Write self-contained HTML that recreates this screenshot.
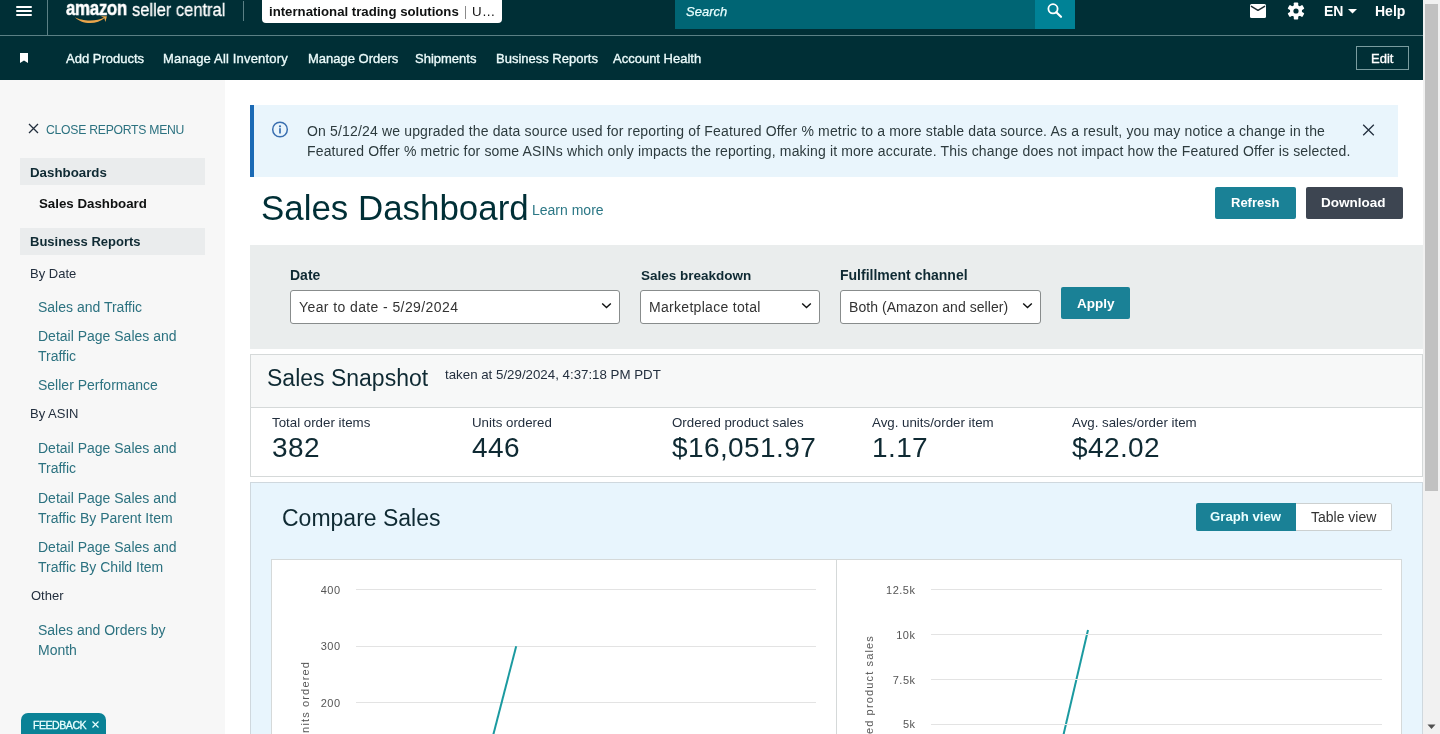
<!DOCTYPE html>
<html><head><meta charset="utf-8"><style>
html,body{margin:0;padding:0;width:1440px;height:734px;overflow:hidden;background:#fff;font-family:"Liberation Sans",sans-serif;}
.t{position:absolute;white-space:nowrap;will-change:transform;}
.r{position:absolute;}
.a{position:absolute;overflow:visible;}
</style></head><body>
<div class="r" style="left:0px;top:0px;width:1423px;height:80px;background:#002f36"></div>
<div class="r" style="left:0px;top:35px;width:1423px;height:1px;background:#5b8085"></div>
<div class="r" style="left:47px;top:0px;width:1px;height:35px;background:#5b8085"></div>
<div class="r" style="left:16px;top:6px;width:16px;height:2px;background:#fff;border-radius:1px"></div>
<div class="r" style="left:16px;top:10px;width:16px;height:2px;background:#fff;border-radius:1px"></div>
<div class="r" style="left:16px;top:14px;width:16px;height:2px;background:#fff;border-radius:1px"></div>
<div class="t" style="left:66px;top:-3.53px;font-size:20px;line-height:25px;color:#fff;font-weight:bold;transform:scaleX(0.84);transform-origin:0 0;letter-spacing:-0.3px;-webkit-text-stroke:0.5px #fff">amazon</div>
<svg class="a" style="left:0;top:0" width="120" height="30" viewBox="0 0 120 30"><path d="M75 17.2 C80 23.5 96 26 105 17.8 L104.6 17.3 C96 22.2 81 20.8 75 17.2 Z" fill="#e9a54b"/><path d="M100.8 16.2 L106.9 16.3 L105.4 21.9 L104.3 18.1 Z" fill="#e9a54b"/></svg>
<div class="t" style="left:132px;top:-2.11px;font-size:18.5px;line-height:23px;color:#fff;font-weight:normal;transform:scaleX(0.89);transform-origin:0 0;-webkit-text-stroke:0.3px #fff">seller central</div>
<div class="r" style="left:243px;top:1px;width:1px;height:20px;background:#5b8085"></div>
<div class="r" style="left:262px;top:0px;width:240px;height:23px;background:#fff;border-radius:0 0 4px 4px"></div>
<div class="t" style="left:268.5px;top:3.72px;font-size:13.2px;line-height:16px;color:#0f1111;font-weight:normal;"><b>international trading solutions</b></div>
<div class="r" style="left:465px;top:6px;width:1px;height:13px;background:#8a8a8a"></div>
<div class="t" style="left:471.5px;top:3.19px;font-size:13.3px;line-height:17px;color:#111;font-weight:normal;letter-spacing:0.3px">U…</div>
<div class="r" style="left:675px;top:0px;width:360px;height:29px;background:#006574"></div>
<div class="t" style="left:686px;top:3.69px;font-size:13px;line-height:16px;color:#e8ffff;font-weight:normal;font-style:italic;-webkit-text-stroke:0.25px #e8ffff">Search</div>
<div class="r" style="left:1035px;top:0px;width:40px;height:29px;background:#008296"></div>
<svg class="a" style="left:1045px;top:1px" width="20" height="20" viewBox="0 0 20 20"><circle cx="8" cy="7.8" r="4.6" stroke="#fff" stroke-width="1.8" fill="none"/><path d="M11.3 11.2 L16 15.8" stroke="#fff" stroke-width="2.2" stroke-linecap="round"/></svg>
<svg class="a" style="left:1250px;top:4px" width="16" height="14" viewBox="0 0 16 14"><rect x="0" y="0" width="16" height="14" rx="1.5" fill="#fff"/><path d="M1.4 2.3 L8 6.4 L14.6 2.3" stroke="#1a2a30" stroke-width="1.4" fill="none" stroke-linecap="round" stroke-linejoin="round"/></svg>
<svg class="a" style="left:1287px;top:2px" width="18" height="18" viewBox="0 0 18 18"><g fill="#fff" transform="translate(9 9)"><rect x="-2.2" y="-8.5" width="4.4" height="5" rx="0.8" transform="rotate(0)"/><rect x="-2.2" y="-8.5" width="4.4" height="5" rx="0.8" transform="rotate(60)"/><rect x="-2.2" y="-8.5" width="4.4" height="5" rx="0.8" transform="rotate(120)"/><rect x="-2.2" y="-8.5" width="4.4" height="5" rx="0.8" transform="rotate(180)"/><rect x="-2.2" y="-8.5" width="4.4" height="5" rx="0.8" transform="rotate(240)"/><rect x="-2.2" y="-8.5" width="4.4" height="5" rx="0.8" transform="rotate(300)"/><circle r="6"/></g><circle cx="9" cy="9" r="2.6" fill="#002f36"/></svg>
<div class="t" style="left:1324px;top:2.15px;font-size:14px;line-height:18px;color:#fff;font-weight:bold;">EN</div>
<svg class="a" style="left:1348px;top:9px" width="9" height="5" viewBox="0 0 9 5"><path d="M0 0 L9 0 L4.5 4.5 Z" fill="#fff"/></svg>
<div class="t" style="left:1375px;top:2.15px;font-size:14px;line-height:18px;color:#fff;font-weight:bold;">Help</div>
<svg class="a" style="left:20px;top:53px" width="8" height="10" viewBox="0 0 8 10"><path d="M0 0 H8 V10 L4 7.5 L0 10 Z" fill="#fff"/></svg>
<div class="t" style="left:66px;top:51.29px;font-size:13px;line-height:16px;color:#eafafa;font-weight:normal;-webkit-text-stroke:0.35px #eafafa">Add Products</div>
<div class="t" style="left:163px;top:51.29px;font-size:13px;line-height:16px;color:#eafafa;font-weight:normal;letter-spacing:0.17px;-webkit-text-stroke:0.35px #eafafa">Manage All Inventory</div>
<div class="t" style="left:307.5px;top:51.29px;font-size:13px;line-height:16px;color:#eafafa;font-weight:normal;-webkit-text-stroke:0.35px #eafafa">Manage Orders</div>
<div class="t" style="left:414.5px;top:51.29px;font-size:13px;line-height:16px;color:#eafafa;font-weight:normal;-webkit-text-stroke:0.35px #eafafa">Shipments</div>
<div class="t" style="left:495.5px;top:51.29px;font-size:13px;line-height:16px;color:#eafafa;font-weight:normal;-webkit-text-stroke:0.35px #eafafa">Business Reports</div>
<div class="t" style="left:613px;top:51.29px;font-size:13px;line-height:16px;color:#eafafa;font-weight:normal;-webkit-text-stroke:0.35px #eafafa">Account Health</div>
<div class="r" style="left:1356px;top:46px;width:53px;height:24px;border:1px solid #7a9c9f;box-sizing:border-box"></div>
<div class="t" style="left:1371px;top:51.49px;font-size:13px;line-height:16px;color:#fff;font-weight:normal;-webkit-text-stroke:0.35px #fff">Edit</div>
<div class="r" style="left:0px;top:80px;width:225px;height:654px;background:#f7f7f7"></div>
<svg class="a" style="left:28px;top:123px" width="11" height="11" viewBox="0 0 11 11"><path d="M1 1 L10 10 M10 1 L1 10" stroke="#232f3e" stroke-width="1.3"/></svg>
<div class="t" style="left:46px;top:123.27px;font-size:12.2px;line-height:15px;color:#2c7280;font-weight:normal;letter-spacing:-0.25px">CLOSE REPORTS MENU</div>
<div class="r" style="left:20px;top:158px;width:185px;height:27px;background:#eaeced"></div>
<div class="t" style="left:30px;top:164.39px;font-size:13.3px;line-height:17px;color:#0f2a33;font-weight:bold;">Dashboards</div>
<div class="t" style="left:39px;top:194.89px;font-size:13.3px;line-height:17px;color:#0f1111;font-weight:bold;">Sales Dashboard</div>
<div class="r" style="left:20px;top:228px;width:185px;height:27px;background:#eaeced"></div>
<div class="t" style="left:30px;top:233.99px;font-size:13px;line-height:16px;color:#0f2a33;font-weight:bold;">Business Reports</div>
<div class="t" style="left:29.5px;top:265.59px;font-size:13px;line-height:16px;color:#232f3e;font-weight:normal;">By Date</div>
<div class="t" style="left:38.2px;top:298.15px;font-size:14px;line-height:18px;color:#2c7280;font-weight:normal;">Sales and Traffic</div>
<div class="t" style="left:38.2px;top:327.25px;font-size:14px;line-height:18px;color:#2c7280;font-weight:normal;">Detail Page Sales and</div>
<div class="t" style="left:38.2px;top:346.95px;font-size:14px;line-height:18px;color:#2c7280;font-weight:normal;">Traffic</div>
<div class="t" style="left:38.2px;top:375.95px;font-size:14px;line-height:18px;color:#2c7280;font-weight:normal;">Seller Performance</div>
<div class="t" style="left:29.5px;top:406.49px;font-size:13px;line-height:16px;color:#232f3e;font-weight:normal;">By ASIN</div>
<div class="t" style="left:38.2px;top:439.35px;font-size:14px;line-height:18px;color:#2c7280;font-weight:normal;">Detail Page Sales and</div>
<div class="t" style="left:38.2px;top:459.05px;font-size:14px;line-height:18px;color:#2c7280;font-weight:normal;">Traffic</div>
<div class="t" style="left:38.2px;top:489.15px;font-size:14px;line-height:18px;color:#2c7280;font-weight:normal;">Detail Page Sales and</div>
<div class="t" style="left:38.2px;top:508.85px;font-size:14px;line-height:18px;color:#2c7280;font-weight:normal;">Traffic By Parent Item</div>
<div class="t" style="left:38.2px;top:537.75px;font-size:14px;line-height:18px;color:#2c7280;font-weight:normal;">Detail Page Sales and</div>
<div class="t" style="left:38.2px;top:557.85px;font-size:14px;line-height:18px;color:#2c7280;font-weight:normal;">Traffic By Child Item</div>
<div class="t" style="left:30.8px;top:588.39px;font-size:13px;line-height:16px;color:#232f3e;font-weight:normal;">Other</div>
<div class="t" style="left:38.2px;top:620.75px;font-size:14px;line-height:18px;color:#2c7280;font-weight:normal;">Sales and Orders by</div>
<div class="t" style="left:38.2px;top:640.95px;font-size:14px;line-height:18px;color:#2c7280;font-weight:normal;">Month</div>
<div class="r" style="left:21px;top:713px;width:85px;height:27px;background:#0a8296;border-radius:7px 7px 0 0"></div>
<div class="t" style="left:32.5px;top:718.82px;font-size:10.6px;line-height:13px;color:#eaffff;font-weight:normal;letter-spacing:-0.5px;-webkit-text-stroke:0.3px #eaffff">FEEDBACK</div>
<svg class="a" style="left:92px;top:721px" width="7" height="7" viewBox="0 0 7 7"><path d="M0.5 0.5 L6.5 6.5 M6.5 0.5 L0.5 6.5" stroke="#eaffff" stroke-width="1.2"/></svg>
<div class="r" style="left:250px;top:105px;width:1148px;height:72px;background:#e9f5fc"></div>
<div class="r" style="left:250px;top:105px;width:4px;height:72px;background:#1b6ab5"></div>
<svg class="a" style="left:271px;top:121px" width="18" height="18" viewBox="0 0 18 18"><circle cx="9" cy="8.5" r="7.3" stroke="#3a6fb0" stroke-width="1.5" fill="none"/><circle cx="9" cy="5.3" r="1.1" fill="#3a6fb0"/><rect x="8.15" y="7.2" width="1.7" height="5.3" fill="#3a6fb0"/></svg>
<div class="t" style="left:306.8px;top:121.95px;font-size:14px;line-height:18px;color:#2d3b3e;font-weight:normal;letter-spacing:0.16px">On 5/12/24 we upgraded the data source used for reporting of Featured Offer % metric to a more stable data source. As a result, you may notice a change in the</div>
<div class="t" style="left:306.8px;top:142.15px;font-size:14px;line-height:18px;color:#2d3b3e;font-weight:normal;letter-spacing:0.15px">Featured Offer % metric for some ASINs which only impacts the reporting, making it more accurate. This change does not impact how the Featured Offer is selected.</div>
<svg class="a" style="left:1362px;top:124px" width="13" height="12" viewBox="0 0 13 12"><path d="M1.2 0.8 L11.8 11.2 M11.8 0.8 L1.2 11.2" stroke="#232f3e" stroke-width="1.3"/></svg>
<div class="t" style="left:260.5px;top:187.90px;font-size:34.9px;line-height:40px;color:#002f36;font-weight:normal;">Sales Dashboard</div>
<div class="t" style="left:532px;top:201.15px;font-size:14px;line-height:18px;color:#2b7785;font-weight:normal;">Learn more</div>
<div class="r" style="left:1215px;top:187px;width:81px;height:32px;background:#1a8196;border-radius:2px"></div>
<div class="t" style="left:1231px;top:194.99px;font-size:13px;line-height:16px;color:#fff;font-weight:bold;">Refresh</div>
<div class="r" style="left:1306px;top:187px;width:97px;height:32px;background:#3d4551;border-radius:2px"></div>
<div class="t" style="left:1321px;top:194.32px;font-size:13.5px;line-height:17px;color:#fff;font-weight:bold;">Download</div>
<div class="r" style="left:250px;top:245px;width:1173px;height:104px;background:#eaeded"></div>
<div class="t" style="left:290px;top:266.15px;font-size:14px;line-height:18px;color:#0f2a33;font-weight:bold;">Date</div>
<div class="t" style="left:641px;top:266.82px;font-size:13.5px;line-height:17px;color:#0f2a33;font-weight:bold;">Sales breakdown</div>
<div class="t" style="left:839.5px;top:266.15px;font-size:14px;line-height:18px;color:#0f2a33;font-weight:bold;">Fulfillment channel</div>
<div class="r" style="left:290px;top:290px;width:330px;height:34px;background:#fff;border:1px solid #888c8c;border-radius:3px;box-sizing:border-box"></div>
<div class="t" style="left:298.7px;top:298.15px;font-size:14px;line-height:18px;color:#333;font-weight:normal;letter-spacing:0.4px">Year to date - 5/29/2024</div>
<svg class="a" style="left:600.5px;top:302px" width="11" height="7" viewBox="0 0 11 7"><path d="M1.2 1.5 L5.5 5.6 L9.8 1.5" stroke="#0f1111" stroke-width="1.4" fill="none"/></svg>
<div class="r" style="left:640px;top:290px;width:180px;height:34px;background:#fff;border:1px solid #888c8c;border-radius:3px;box-sizing:border-box"></div>
<div class="t" style="left:648.7px;top:298.15px;font-size:14px;line-height:18px;color:#333;font-weight:normal;letter-spacing:0.3px">Marketplace total</div>
<svg class="a" style="left:800.5px;top:302px" width="11" height="7" viewBox="0 0 11 7"><path d="M1.2 1.5 L5.5 5.6 L9.8 1.5" stroke="#0f1111" stroke-width="1.4" fill="none"/></svg>
<div class="r" style="left:840px;top:290px;width:201px;height:34px;background:#fff;border:1px solid #888c8c;border-radius:3px;box-sizing:border-box"></div>
<div class="t" style="left:848.7px;top:298.15px;font-size:14px;line-height:18px;color:#333;font-weight:normal;letter-spacing:0.05px">Both (Amazon and seller)</div>
<svg class="a" style="left:1021.5px;top:302px" width="11" height="7" viewBox="0 0 11 7"><path d="M1.2 1.5 L5.5 5.6 L9.8 1.5" stroke="#0f1111" stroke-width="1.4" fill="none"/></svg>
<div class="r" style="left:1061px;top:287px;width:69px;height:32px;background:#1a8196;border-radius:2px"></div>
<div class="t" style="left:1077px;top:295.22px;font-size:13.5px;line-height:17px;color:#fff;font-weight:bold;">Apply</div>
<div class="r" style="left:250px;top:354px;width:1173px;height:123px;background:#fff;border:1px solid #d5d9d9;box-sizing:border-box"></div>
<div class="r" style="left:251px;top:355px;width:1171px;height:52px;background:#f7f8f8"></div>
<div class="r" style="left:251px;top:407px;width:1171px;height:1px;background:#d5d9d9"></div>
<div class="t" style="left:267px;top:363.53px;font-size:23px;line-height:29px;color:#0f2a33;font-weight:normal;">Sales Snapshot</div>
<div class="t" style="left:445.3px;top:365.89px;font-size:13.3px;line-height:17px;color:#232f3e;font-weight:normal;">taken at 5/29/2024, 4:37:18 PM PDT</div>
<div class="t" style="left:272px;top:413.59px;font-size:13.3px;line-height:17px;color:#232f3e;font-weight:normal;">Total order items</div>
<div class="t" style="left:272px;top:429.79px;font-size:28px;line-height:35px;color:#0f2a33;font-weight:normal;letter-spacing:0.4px">382</div>
<div class="t" style="left:472px;top:413.59px;font-size:13.3px;line-height:17px;color:#232f3e;font-weight:normal;">Units ordered</div>
<div class="t" style="left:472px;top:429.79px;font-size:28px;line-height:35px;color:#0f2a33;font-weight:normal;letter-spacing:0.4px">446</div>
<div class="t" style="left:672px;top:413.59px;font-size:13.3px;line-height:17px;color:#232f3e;font-weight:normal;">Ordered product sales</div>
<div class="t" style="left:672px;top:429.79px;font-size:28px;line-height:35px;color:#0f2a33;font-weight:normal;letter-spacing:0.4px">$16,051.97</div>
<div class="t" style="left:872px;top:413.59px;font-size:13.3px;line-height:17px;color:#232f3e;font-weight:normal;">Avg. units/order item</div>
<div class="t" style="left:872px;top:429.79px;font-size:28px;line-height:35px;color:#0f2a33;font-weight:normal;letter-spacing:0.4px">1.17</div>
<div class="t" style="left:1072px;top:413.59px;font-size:13.3px;line-height:17px;color:#232f3e;font-weight:normal;">Avg. sales/order item</div>
<div class="t" style="left:1072px;top:429.79px;font-size:28px;line-height:35px;color:#0f2a33;font-weight:normal;letter-spacing:0.4px">$42.02</div>
<div class="r" style="left:250px;top:482px;width:1173px;height:278px;background:#e8f5fd;border:1px solid #cfd8de;box-sizing:border-box"></div>
<div class="t" style="left:282px;top:503.53px;font-size:23px;line-height:29px;color:#0f2a33;font-weight:normal;">Compare Sales</div>
<div class="r" style="left:1196px;top:503px;width:100px;height:28px;background:#1a8196;border-radius:2px 0 0 2px"></div>
<div class="t" style="left:1210px;top:509.12px;font-size:13.2px;line-height:16px;color:#eaffff;font-weight:bold;">Graph view</div>
<div class="r" style="left:1296px;top:503px;width:96px;height:28px;background:#fff;border:1px solid #ccd0d0;border-left:none;border-radius:0 2px 2px 0;box-sizing:border-box"></div>
<div class="t" style="left:1311px;top:507.85px;font-size:14px;line-height:18px;color:#333;font-weight:normal;">Table view</div>
<div class="r" style="left:271px;top:559px;width:1131px;height:201px;background:#fff;border:1px solid #d5d9d9;box-sizing:border-box"></div>
<div class="r" style="left:836px;top:560px;width:1px;height:200px;background:#d5d9d9"></div>
<div class="r" style="left:356px;top:589px;width:460px;height:1px;background:#e3e3e3"></div>
<div class="t" style="left:300px;width:40.5px;text-align:right;top:582.5px;font-size:11px;line-height:14px;color:#555;letter-spacing:0.5px">400</div>
<div class="r" style="left:356px;top:646px;width:460px;height:1px;background:#e3e3e3"></div>
<div class="t" style="left:300px;width:40.5px;text-align:right;top:639.0px;font-size:11px;line-height:14px;color:#555;letter-spacing:0.5px">300</div>
<div class="r" style="left:356px;top:702px;width:460px;height:1px;background:#e3e3e3"></div>
<div class="t" style="left:300px;width:40.5px;text-align:right;top:695.5px;font-size:11px;line-height:14px;color:#555;letter-spacing:0.5px">200</div>
<div class="t" style="left:244.60000000000002px;top:713.7px;width:120px;height:14px;font-size:11px;line-height:14px;color:#555;letter-spacing:1.15px;transform:rotate(-90deg);white-space:nowrap;text-align:right">Units ordered</div>
<svg class="a" style="left:0;top:0" width="1440" height="734"><path d="M516.2 646.2 L480 786" stroke="#1b9aa0" stroke-width="2" fill="none"/><path d="M1088 630 L1040 835" stroke="#1b9aa0" stroke-width="2" fill="none"/></svg>
<div class="r" style="left:931px;top:589px;width:451px;height:1px;background:#e3e3e3"></div>
<div class="t" style="left:860px;width:55.5px;text-align:right;top:582.5px;font-size:11px;line-height:14px;color:#555;letter-spacing:0.5px">12.5k</div>
<div class="r" style="left:931px;top:634px;width:451px;height:1px;background:#e3e3e3"></div>
<div class="t" style="left:860px;width:55.5px;text-align:right;top:627.8px;font-size:11px;line-height:14px;color:#555;letter-spacing:0.5px">10k</div>
<div class="r" style="left:931px;top:679px;width:451px;height:1px;background:#e3e3e3"></div>
<div class="t" style="left:860px;width:55.5px;text-align:right;top:672.6px;font-size:11px;line-height:14px;color:#555;letter-spacing:0.5px">7.5k</div>
<div class="r" style="left:931px;top:724px;width:451px;height:1px;background:#e3e3e3"></div>
<div class="t" style="left:860px;width:55.5px;text-align:right;top:717.4px;font-size:11px;line-height:14px;color:#555;letter-spacing:0.5px">5k</div>
<div class="t" style="left:789px;top:707.7px;width:160px;height:14px;font-size:11px;line-height:14px;color:#555;letter-spacing:1.15px;transform:rotate(-90deg);white-space:nowrap;text-align:right">Ordered product sales</div>
<div class="r" style="left:1423px;top:0px;width:17px;height:734px;background:#f1f1f1"></div>
<div class="r" style="left:1425px;top:4px;width:13px;height:487px;background:#c1c1c1"></div>
<svg class="a" style="left:1427px;top:724px" width="9" height="6" viewBox="0 0 9 6"><path d="M0.5 0.5 L8.5 0.5 L4.5 5 Z" fill="#505050"/></svg>
</body></html>
